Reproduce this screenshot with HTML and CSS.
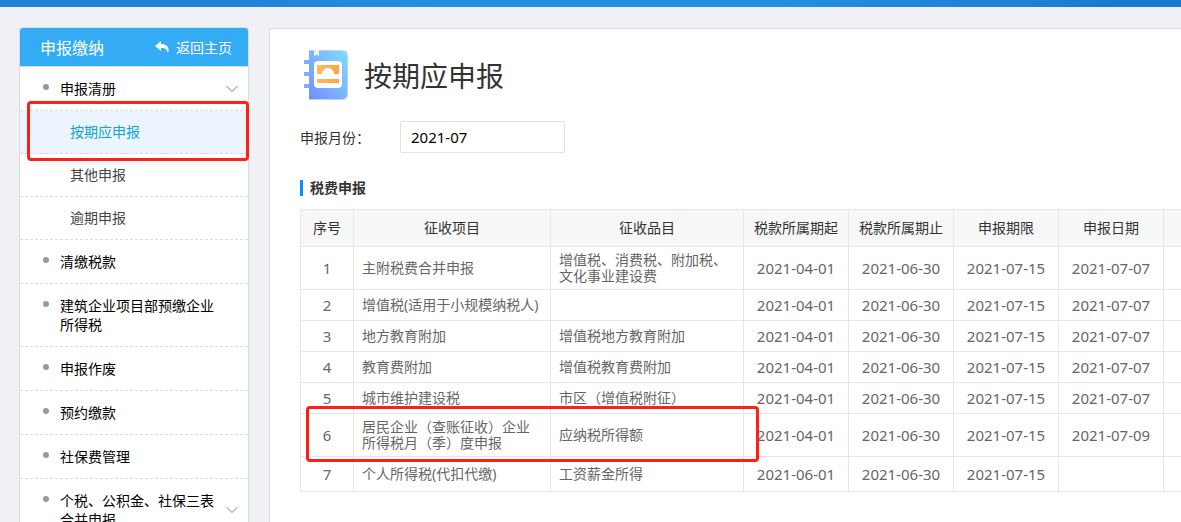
FILE: index.html
```html
<!DOCTYPE html>
<html lang="zh-CN">
<head>
    <meta charset="UTF-8">
    <meta name="viewport" content="width=device-width, initial-scale=1.0">
    <title>按期应申报</title>

    <link rel="stylesheet" href="styles.css">
</head>
<body>
    <div class="banner"></div>

    <div class="wrapper">
        <aside class="sidebar">
            <div class="sidebar_head">
                <span class="sidebar_title">申报缴纳</span>
                <a class="back" href="#">
                    <svg width="14" height="12" viewBox="0 0 14 12"><path d="M6 0 L0 5 L6 10 V7 C10 6.600 12 8 13 12 C15 7 12 3 6 3 Z" fill="#fff"/></svg>
                    返回主页
                </a>
            </div>

            <ul class="menu">
                <li class="item"><a href="#">申报清册</a><svg class="arrow" width="12" height="8" viewBox="0 0 12 8"><path d="M.5 1 L6 6.500 L11.500 1"/></svg></li>
                <li class="sub active"><a href="#">按期应申报</a><div class="mark mark_menu"></div></li>
                <li class="sub"><a href="#">其他申报</a></li>
                <li class="sub"><a href="#">逾期申报</a></li>
                <li class="item"><a href="#">清缴税款</a></li>
                <li class="item"><a href="#">建筑企业项目部预缴企业所得税</a></li>
                <li class="item"><a href="#">申报作废</a></li>
                <li class="item"><a href="#">预约缴款</a></li>
                <li class="item"><a href="#">社保费管理</a></li>
                <li class="item"><a href="#">个税、公积金、社保三表合并申报</a><svg class="arrow" width="12" height="8" viewBox="0 0 12 8"><path d="M.5 1 L6 6.500 L11.500 1"/></svg></li>
            </ul>
        </aside>

        <main class="content">
            <div class="heading">
                <svg class="book" width="46" height="50" viewBox="0 0 46 50">
                    <defs>
                        <linearGradient id="cover" x1="1" y1="0" x2="0" y2="1">
                            <stop offset="0" stop-color="#7fdcff"/>
                            <stop offset="1" stop-color="#748dff"/>
                        </linearGradient>
                        <linearGradient id="picture" x1="0" y1="0" x2="1" y2="0">
                            <stop offset="0" stop-color="#ffb764"/>
                            <stop offset="1" stop-color="#ffa640"/>
                        </linearGradient>
                    </defs>
                    <path d="M5 0 H38 Q44 0 44 6 V44 Q44 50 38 50 H5 Z" fill="#b4d4ff"/>
                    <path d="M5 1 H10 V6 L12.500 4.500 L15 6 V1 H37 Q43 1 43 7 V43 Q43 49 37 49 H5 Z" fill="url(#cover)"/>
                    <path d="M10 0 H15 V6 L12.500 4.500 L10 6 Z" fill="#e6f3ff"/>
                    <path d="M0 12 H6 M0 24 H6 M0 36 H6" stroke="#83aaff" stroke-width="4"/>
                    <rect x="10" y="11" width="28" height="27" rx="4" fill="#fff"/>
                    <path d="M13 15 H35 V24 H30 A6 6 0 0 0 18 24 H13 Z" fill="url(#picture)"/>
                    <rect x="13" y="29" width="22" height="4" fill="url(#picture)"/>
                </svg>
                <h1>按期应申报</h1>
            </div>

            <div class="filter">
                <label for="month">申报月份：</label>
                <input id="month" type="text" value="2021-07">
            </div>

            <h2>税费申报</h2>

            <div class="table_wrapper">
                <table>
                    <colgroup>
                        <col class="col_no"><col class="col_item"><col class="col_sub">
                        <col class="col_date"><col class="col_date"><col class="col_date"><col class="col_date"><col class="col_date">
                    </colgroup>
                    <thead>
                        <tr><th>序号</th><th>征收项目</th><th>征收品目</th><th>税款所属期起</th><th>税款所属期止</th><th>申报期限</th><th>申报日期</th><th></th></tr>
                    </thead>
                    <tbody>
                        <tr class="tall"><td class="num">1</td><td>主附税费合并申报</td><td>增值税、消费税、附加税、文化事业建设费</td><td class="num">2021-04-01</td><td class="num">2021-06-30</td><td class="num">2021-07-15</td><td class="num">2021-07-07</td><td></td></tr>
                        <tr><td class="num">2</td><td>增值税(适用于小规模纳税人)</td><td></td><td class="num">2021-04-01</td><td class="num">2021-06-30</td><td class="num">2021-07-15</td><td class="num">2021-07-07</td><td></td></tr>
                        <tr><td class="num">3</td><td>地方教育附加</td><td>增值税地方教育附加</td><td class="num">2021-04-01</td><td class="num">2021-06-30</td><td class="num">2021-07-15</td><td class="num">2021-07-07</td><td></td></tr>
                        <tr><td class="num">4</td><td>教育费附加</td><td>增值税教育费附加</td><td class="num">2021-04-01</td><td class="num">2021-06-30</td><td class="num">2021-07-15</td><td class="num">2021-07-07</td><td></td></tr>
                        <tr><td class="num">5</td><td>城市维护建设税</td><td>市区（增值税附征）</td><td class="num">2021-04-01</td><td class="num">2021-06-30</td><td class="num">2021-07-15</td><td class="num">2021-07-07</td><td></td></tr>
                        <tr class="tall"><td class="num">6</td><td>居民企业（查账征收）企业所得税月（季）度申报</td><td>应纳税所得额</td><td class="num">2021-04-01</td><td class="num">2021-06-30</td><td class="num">2021-07-15</td><td class="num">2021-07-09</td><td></td></tr>
                        <tr class="last"><td class="num">7</td><td>个人所得税(代扣代缴)</td><td>工资薪金所得</td><td class="num">2021-06-01</td><td class="num">2021-06-30</td><td class="num">2021-07-15</td><td class="num"></td><td></td></tr>
                    </tbody>
                </table>
                <div class="mark mark_row"></div>
            </div>
        </main>
    </div>
</body>
</html>
```

FILE: styles.css
```css
*
{
    box-sizing: border-box;
}

body
{
    display: flex;
    flex-direction: column;
    height: 100vh;
    margin: 0;
    overflow: hidden;
    background-color: #f0f1f4;
    font-family: "Noto Sans", "Noto Sans CJK SC", sans-serif;
    font-size: 14px;
    color: #333;
}

a
{
    color: inherit;
    text-decoration: none;
}

.banner
{
    flex: none;
    height: 7px;
    background: linear-gradient(90deg, #1e82d9 0%, #1e82d9 18%, #248fe2 38%, #248fe2 65%, #187bd2 95%);
}

.wrapper
{
    display: flex;
    flex: 1;
    align-items: flex-start;
    gap: 20px;
    min-height: 0;
    padding: 20px 0 0 19px;
}

.sidebar
{
    flex: none;
    width: 230px;
    border: 1px solid #d9dce1;
    border-radius: 4px 4px 0 0;
    background-color: #fff;
}

.sidebar_head
{
    display: flex;
    align-items: center;
    justify-content: space-between;
    height: 39px;
    padding: 0 16px 0 20px;
    border-bottom: 1px solid #d9dce1;
    border-radius: 3px 3px 0 0;
    background-color: #34acf5;
    color: #fff;
}

.sidebar_title
{
    font-size: 16px;
}

.back
{
    display: flex;
    align-items: center;
    gap: 7px;
}

.menu
{
    margin: 0;
    padding: 0;
    list-style: none;
}

.menu li
{
    display: flex;
    position: relative;
    border-bottom: 1px dashed #d9dce1;
}

.item
{
    align-items: center;
    padding: 12px 10px 12px 40px;
    line-height: 19px;
    color: #000;
}

.item::before
{
    content: "";
    position: absolute;
    top: 17px;
    left: 23px;
    width: 6px;
    height: 6px;
    border-radius: 50%;
    background-color: #999;
}

.item a
{
    width: 156px;
}

.arrow
{
    margin-left: auto;
    fill: none;
    stroke: #808080;
}

.sub
{
    padding: 11px 10px 11px 50px;
    line-height: 20px;
    color: #444;
}

.sub.active
{
    background-color: #ecf5fd;
    color: #0ba5d5;
}

/* red frames */
.mark
{
    position: absolute;
    z-index: 1;
    border: 3px solid #ff2015;
    border-radius: 4px;
    pointer-events: none;
}

.mark_menu
{
    top: -10px;
    right: -1px;
    bottom: -8px;
    left: 7px;
}

.mark_row
{
    top: 197px;
    left: 6px;
    width: 453px;
    height: 56px;
}

.content
{
    flex: 1;
    align-self: stretch;
    min-width: 0;
    margin-top: 1px;
    padding: 19px 0 0 30px;
    overflow: hidden;
    border-top: 1px solid #d9dce1;
    border-left: 1px solid #d9dce1;
    background-color: #fff;
}

.heading
{
    display: flex;
    align-items: center;
    gap: 14px;
    height: 54px;
    padding-left: 4px;
}

h1
{
    margin: 0;
    font-size: 28px;
    font-weight: 400;
}

.filter
{
    display: flex;
    align-items: center;
    margin-top: 19px;
}

.filter label
{
    width: 100px;
}

.filter input
{
    width: 165px;
    height: 32px;
    padding: 0 10px;
    border: 1px solid #e2e2e2;
    border-radius: 2px;
    background-color: #fff;
    font-family: inherit;
    font-size: 15px;
    color: #000;
}

h2
{
    margin: 27px 0 13px;
    padding-left: 7px;
    border-left: 3px solid #0a8cff;
    font-size: 14px;
    line-height: 16px;
}

.table_wrapper
{
    position: relative;
}

table
{
    width: 898px;
    min-width: 100%;
    border-collapse: collapse;
    table-layout: fixed;
}

.col_no
{
    width: 53px;
}

.col_item
{
    width: 197px;
}

.col_sub
{
    width: 193px;
}

.col_date
{
    width: 105px;
}

th,
td
{
    padding: 0 8px;
    border: 1px solid #e6e6e6;
    line-height: 16px;
    text-align: left;
}

th
{
    height: 37px;
    padding: 0;
    background-color: #f7f7f7;
    font-weight: 400;
    text-align: center;
}

td
{
    height: 31px;
    color: #666;
}

.tall td
{
    height: 43px;
}

.last td
{
    height: 35px;
}

td.num
{
    padding: 0;
    font-size: 15px;
    text-align: center;
}
```
